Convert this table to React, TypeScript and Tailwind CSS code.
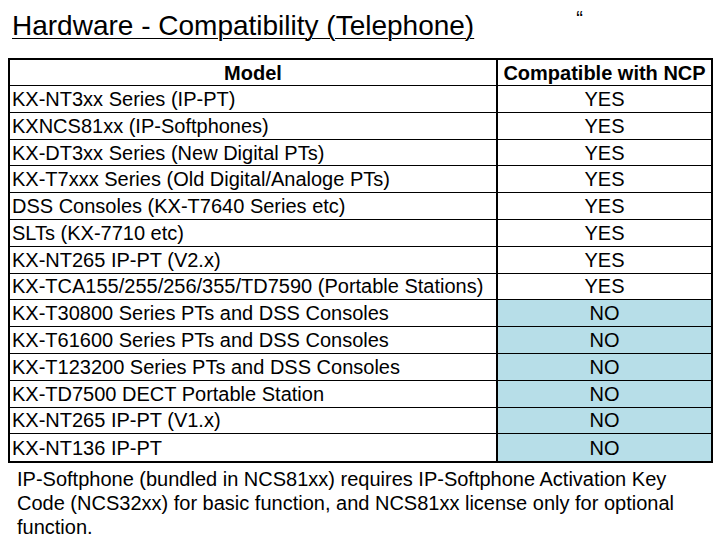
import React from "react";

const rows = [
  { model: "KX-NT3xx Series (IP-PT)", ok: true },
  { model: "KXNCS81xx (IP-Softphones)", ok: true },
  { model: "KX-DT3xx Series (New Digital PTs)", ok: true },
  { model: "KX-T7xxx Series (Old Digital/Analoge PTs)", ok: true },
  { model: "DSS Consoles (KX-T7640 Series etc)", ok: true },
  { model: "SLTs (KX-7710 etc)", ok: true },
  { model: "KX-NT265 IP-PT (V2.x)", ok: true },
  { model: "KX-TCA155/255/256/355/TD7590 (Portable Stations)", ok: true },
  { model: "KX-T30800 Series PTs and DSS Consoles", ok: false },
  { model: "KX-T61600 Series PTs and DSS Consoles", ok: false },
  { model: "KX-T123200 Series PTs and DSS Consoles", ok: false },
  { model: "KX-TD7500 DECT Portable Station", ok: false },
  { model: "KX-NT265 IP-PT (V1.x)", ok: false },
  { model: "KX-NT136 IP-PT", ok: false },
];

export default function App() {
  return (
    <div className="w-[720px] h-[540px] bg-white text-black overflow-hidden font-['Liberation_Sans',Arial,sans-serif]">
      {/* Title */}
      <div className="flex items-start h-[58px]">
        <h1 className="ml-[12px] mt-[10px] text-[28px] leading-[32px] underline underline-offset-[3px] decoration-1">
          Hardware - Compatibility (Telephone)
        </h1>
        <span className="ml-[102px] mt-[8px] text-[20px] leading-[20px]">“</span>
      </div>

      {/* Table */}
      <div className="ml-[8px] w-[705px] border-2 border-black">
        <div className="flex h-[26px] border-b border-black text-[20px] font-bold">
          <div className="w-[488px] border-r-2 border-black flex items-center justify-center">Model</div>
          <div className="flex-1 flex items-center justify-center">Compatible with NCP</div>
        </div>
        {rows.map((r, i) => (
          <div
            key={i}
            className={`flex h-[26.8px] text-[20px] ${i < rows.length - 1 ? "border-b border-black" : ""}`}
          >
            <div className="w-[488px] border-r-2 border-black flex items-center pl-[2px] whitespace-nowrap">{r.model}</div>
            <div className={`flex-1 flex items-center justify-center ${r.ok ? "" : "bg-[#b7dee8]"}`}>
              {r.ok ? "YES" : "NO"}
            </div>
          </div>
        ))}
      </div>

      {/* Note */}
      <p className="ml-[17px] mt-[4px] w-[680px] text-[20px] leading-[24px]">
        IP-Softphone (bundled in NCS81xx) requires IP-Softphone Activation Key Code (NCS32xx) for basic function, and NCS81xx license only for optional function.
      </p>
    </div>
  );
}
